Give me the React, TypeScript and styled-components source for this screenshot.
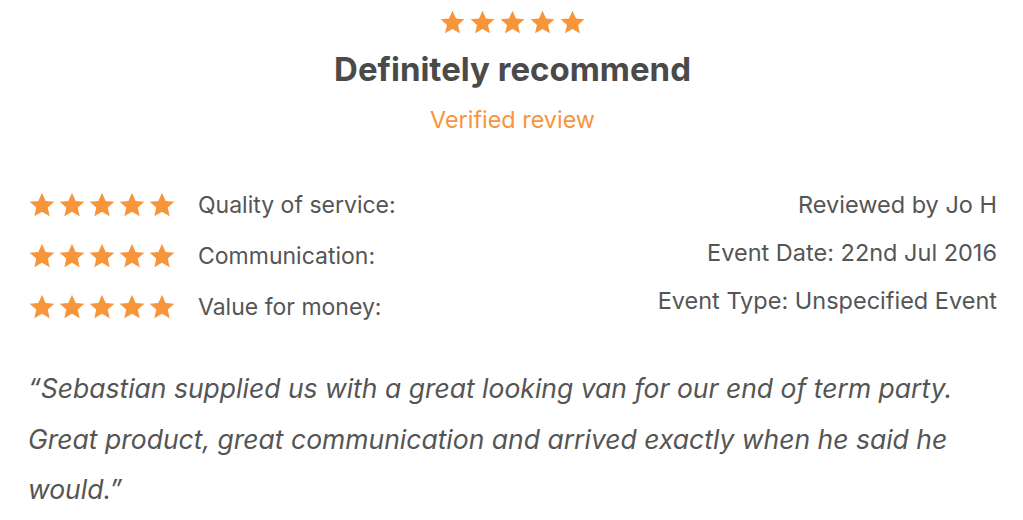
import React from 'react';
import styled, { createGlobalStyle } from 'styled-components';

const GlobalStyle = createGlobalStyle`
  body {
    margin: 0;
    background: #fff;
    font-family: 'Inter', 'Liberation Sans', sans-serif;
    color: #555;
  }
`;

const orange = '#f7953b';

const Page = styled.div`
  width: 1023px;
  height: 520px;
  overflow: hidden;
  box-sizing: border-box;
  padding: 9px 26px 0 28px;
`;

const Header = styled.div`
  display: flex;
  flex-direction: column;
  align-items: center;
`;

const Stars = styled.div<{ $size: number; $gap: number }>`
  display: flex;
  gap: ${(p) => p.$gap}px;
  svg {
    width: ${(p) => p.$size}px;
    height: ${(p) => p.$size}px;
    display: block;
  }
`;

const Title = styled.h1`
  margin: 13px 0 0;
  font-size: 33px;
  font-weight: 700;
  color: #4a4a4a;
  line-height: 40px;
`;

const Verified = styled.div`
  margin-top: 17px;
  font-size: 23.4px;
  color: ${orange};
  line-height: 28px;
`;

const Details = styled.div`
  display: flex;
  justify-content: space-between;
  margin-top: 57px;
`;

const Ratings = styled.div`
  display: flex;
  flex-direction: column;
  gap: 23px;
`;

const RatingRow = styled.div`
  display: flex;
  align-items: center;
  gap: 22px;
  height: 28px;
  font-size: 23px;
  color: #555;
`;

const Meta = styled.div`
  display: flex;
  flex-direction: column;
  align-items: flex-end;
  gap: 20px;
  font-size: 23.5px;
  color: #555;
  line-height: 28px;
`;

const Quote = styled.p`
  margin: 42px 0 0;
  font-size: 26.5px;
  font-style: italic;
  line-height: 50.5px;
  color: #555;
`;

const Star = () => (
  <svg viewBox="0 0 24 24">
    <path
      fill={orange}
      d="M12 1.6l3.1 6.9 7.5.7-5.7 5 1.7 7.4L12 17.8l-6.6 3.8 1.7-7.4-5.7-5 7.5-.7z"
    />
  </svg>
);

const FiveStars = ({ size, gap }: { size: number; gap: number }) => (
  <Stars $size={size} $gap={gap}>
    {[0, 1, 2, 3, 4].map((i) => (
      <Star key={i} />
    ))}
  </Stars>
);

const ratings = ['Quality of service:', 'Communication:', 'Value for money:'];
const meta = ['Reviewed by Jo H', 'Event Date: 22nd Jul 2016', 'Event Type: Unspecified Event'];

const App: React.FC = () => (
  <Page>
    <GlobalStyle />
    <Header>
      <FiveStars size={27} gap={3} />
      <Title>Definitely recommend</Title>
      <Verified>Verified review</Verified>
    </Header>
    <Details>
      <Ratings>
        {ratings.map((label) => (
          <RatingRow key={label}>
            <FiveStars size={28} gap={2} />
            {label}
          </RatingRow>
        ))}
      </Ratings>
      <Meta>
        {meta.map((m) => (
          <div key={m}>{m}</div>
        ))}
      </Meta>
    </Details>
    <Quote>
      “Sebastian supplied us with a great looking van for our end of term party.
      <br />
      Great product, great communication and arrived exactly when he said he would.”
    </Quote>
  </Page>
);

export default App;
